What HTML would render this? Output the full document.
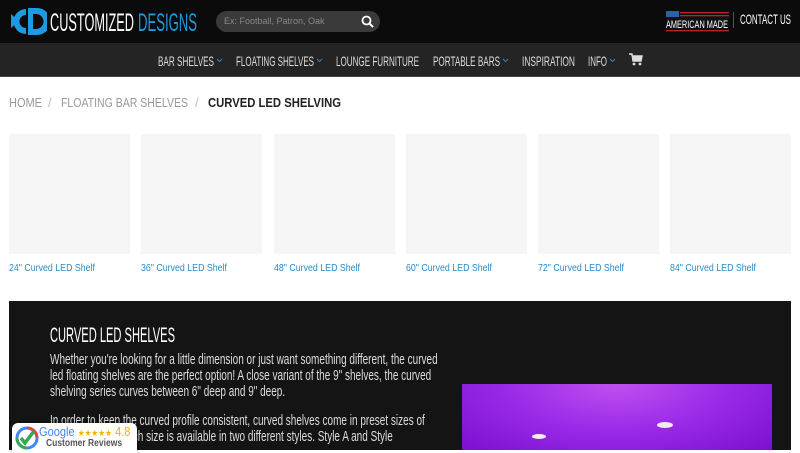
<!DOCTYPE html>
<html><head><meta charset="utf-8"><style>
*{margin:0;padding:0;box-sizing:border-box}
body{width:800px;height:450px;overflow:hidden;background:#fff;font-family:"Liberation Sans",sans-serif;position:relative}
.c{display:inline-block;transform:scaleX(.72);transform-origin:left center;white-space:nowrap}
.top{position:absolute;left:0;top:0;width:800px;height:43px;background:#0b0b0b}
.nav{position:absolute;left:0;top:43px;width:800px;height:34px;background:#242424;border-bottom:1px solid #444}
.tile{position:absolute;top:134px;width:121px;height:120px;background:#f5f5f5}
.dark{position:absolute;left:9px;top:301px;width:782px;height:149px;background:#141414}
p.t{position:absolute;left:50px;color:#ddd;font-size:14.5px;line-height:16px;white-space:nowrap}
p.t .c{transform:scaleX(.69)}
</style></head><body>
<div class="top">
 <svg style="position:absolute;left:9px;top:6px" width="38" height="31" viewBox="0 0 38 31">
  <path d="M2 8 L10 15 L2 22Z" fill="#1e9be0"/>
  <path d="M17 3 A12 12 0 1 0 17 28 L17 22 A6 6 0 1 1 17 9Z" fill="#1e9be0"/>
  <path d="M19 2 H28 A11 11 0 0 1 28 29 H19Z M24 8 V23 H27 A6 6 0 0 0 27 8Z" fill="#1e9be0" fill-rule="evenodd"/>
 </svg>
 <svg style="position:absolute;left:50px;top:8px" width="150" height="28"><text x="0" y="23" font-family="Liberation Sans" font-size="25" fill="#fff" textLength="84" lengthAdjust="spacingAndGlyphs">CUSTOMIZED</text><text x="88" y="23" font-family="Liberation Sans" font-size="25" fill="#1e9be0" textLength="59" lengthAdjust="spacingAndGlyphs">DESIGNS</text></svg>
 <div style="position:absolute;left:216px;top:11px;width:164px;height:21px;border-radius:11px;background:#3a3a3a;color:#888;font-size:9px;padding:5px 8px">Ex: Football, Patron, Oak
  <svg style="position:absolute;right:6px;top:4px" width="13" height="13" viewBox="0 0 13 13"><circle cx="5.5" cy="5.5" r="4" stroke="#fff" stroke-width="1.8" fill="none"/><path d="M8.5 8.5L12 12" stroke="#fff" stroke-width="2"/></svg></div>
 <svg style="position:absolute;left:666px;top:11px" width="63" height="21"><rect width="63" height="21" fill="#111"/><rect x="0" y="0" width="13" height="6" fill="#2a5fb0"/><rect x="14" y="1" width="49" height="1.3" fill="#b22"/><rect x="14" y="4" width="49" height="1.3" fill="#b22"/><rect x="0" y="19" width="63" height="1.3" fill="#b22"/><text x="0" y="17" fill="#fff" font-size="11" font-family="Liberation Sans" textLength="62" lengthAdjust="spacingAndGlyphs">AMERICAN MADE</text></svg>
 <div style="position:absolute;left:733px;top:12px;width:1px;height:16px;background:#555"></div>
 <svg style="position:absolute;left:740px;top:10px" width="52" height="20"><text x="0" y="14" fill="#fff" font-size="14" font-family="Liberation Sans" textLength="51" lengthAdjust="spacingAndGlyphs">CONTACT US</text></svg>
</div>
<div class="nav">
 <svg style="position:absolute;left:0;top:0" width="800" height="34" font-family="Liberation Sans" font-size="14" fill="#ddd">
  <text x="158" y="23" textLength="56" lengthAdjust="spacingAndGlyphs">BAR SHELVES</text><path d="M217 16l2.5 2.5 2.5-2.5" stroke="#3d7fb8" fill="none"/>
  <text x="236" y="23" textLength="78" lengthAdjust="spacingAndGlyphs">FLOATING SHELVES</text><path d="M317 16l2.5 2.5 2.5-2.5" stroke="#3d7fb8" fill="none"/>
  <text x="336" y="23" textLength="83" lengthAdjust="spacingAndGlyphs">LOUNGE FURNITURE</text>
  <text x="433" y="23" textLength="67" lengthAdjust="spacingAndGlyphs">PORTABLE BARS</text><path d="M503 16l2.5 2.5 2.5-2.5" stroke="#3d7fb8" fill="none"/>
  <text x="522" y="23" textLength="53" lengthAdjust="spacingAndGlyphs">INSPIRATION</text>
  <text x="588" y="23" textLength="19" lengthAdjust="spacingAndGlyphs">INFO</text><path d="M610 16l2.5 2.5 2.5-2.5" stroke="#3d7fb8" fill="none"/>
 </svg>
 <svg style="position:absolute;left:629px;top:10px" width="14" height="13" viewBox="0 0 14 13"><path d="M0 1H3L4 8H12L13 3H3.5" fill="#ddd" stroke="#ddd" stroke-width="1.4"/><circle cx="5" cy="11" r="1.4" fill="#ddd"/><circle cx="11" cy="11" r="1.4" fill="#ddd"/></svg>
</div>
<svg style="position:absolute;left:0;top:90px" width="800" height="30" font-family="Liberation Sans" font-size="13">
 <text x="9" y="17" fill="#999" textLength="33" lengthAdjust="spacingAndGlyphs">HOME</text>
 <text x="48" y="17" fill="#bbb">/</text>
 <text x="61" y="17" fill="#999" textLength="127" lengthAdjust="spacingAndGlyphs">FLOATING BAR SHELVES</text>
 <text x="195" y="17" fill="#bbb">/</text>
 <text x="208" y="17" fill="#222" font-weight="bold" textLength="133" lengthAdjust="spacingAndGlyphs">CURVED LED SHELVING</text>
</svg>
<div class="tile" style="left:9px"></div><div class="tile" style="left:141px"></div><div class="tile" style="left:274px"></div><div class="tile" style="left:406px"></div><div class="tile" style="left:538px"></div><div class="tile" style="left:670px"></div>
<svg style="position:absolute;left:0;top:258px" width="800" height="20" font-family="Liberation Sans" font-size="10.5" fill="#2a8bc6">
 <text x="9" y="13" textLength="86" lengthAdjust="spacingAndGlyphs">24" Curved LED Shelf</text>
 <text x="141" y="13" textLength="86" lengthAdjust="spacingAndGlyphs">36" Curved LED Shelf</text>
 <text x="274" y="13" textLength="86" lengthAdjust="spacingAndGlyphs">48" Curved LED Shelf</text>
 <text x="406" y="13" textLength="86" lengthAdjust="spacingAndGlyphs">60" Curved LED Shelf</text>
 <text x="538" y="13" textLength="86" lengthAdjust="spacingAndGlyphs">72" Curved LED Shelf</text>
 <text x="670" y="13" textLength="86" lengthAdjust="spacingAndGlyphs">84" Curved LED Shelf</text>
</svg>
<div class="dark"></div>
<svg style="position:absolute;left:50px;top:322px" width="130" height="26"><text x="0" y="20" fill="#fff" font-size="21" font-family="Liberation Sans" textLength="125" lengthAdjust="spacingAndGlyphs">CURVED LED SHELVES</text></svg>
<p class="t" style="top:352px"><span class="c">Whether you're looking for a little dimension or just want something different, the curved</span></p>
<p class="t" style="top:368px"><span class="c">led floating shelves are the perfect option! A close variant of the 9" shelves, the curved</span></p>
<p class="t" style="top:384px"><span class="c">shelving series curves between 6" deep and 9" deep.</span></p>
<p class="t" style="top:413px"><span class="c">In order to keep the curved profile consistent, curved shelves come in preset sizes of</span></p>
<p class="t" style="top:429px"><span class="c">24" to 84" long. Each size is available in two different styles. Style A and Style</span></p>
<div style="position:absolute;left:462px;top:384px;width:310px;height:66px;background:radial-gradient(ellipse at 50% 0%,#c050f0,#9a2ae8 50%,#7a10d0)">
 <div style="position:absolute;left:70px;top:50px;width:14px;height:5px;border-radius:50%;background:#eee"></div>
 <div style="position:absolute;left:195px;top:38px;width:16px;height:6px;border-radius:50%;background:#eee"></div>
</div>
<div style="position:absolute;left:12px;top:423px;width:125px;height:30px;background:#fff;border-radius:6px 6px 0 0;box-shadow:0 0 3px rgba(0,0,0,.4)">
 <svg style="position:absolute;left:3px;top:3px" width="24" height="24" viewBox="0 0 24 24"><circle cx="12" cy="12" r="10" fill="none" stroke="#4285f4" stroke-width="3"/><path d="M12 2A10 10 0 0 1 22 12" stroke="#ea4335" stroke-width="3" fill="none"/><path d="M2 12A10 10 0 0 0 12 22" stroke="#34a853" stroke-width="3" fill="none"/><path d="M6 12l4 5 9-12" stroke="#34a853" stroke-width="3.5" fill="none"/></svg>
 <div style="position:absolute;left:27px;top:1px;font-size:13px;color:#4285f4;white-space:nowrap"><span class="c" style="transform:scaleX(.85)">Google <span style="color:#f4b400;font-size:9px">★★★★★</span> <span style="color:#f4b400">4.8</span></span></div>
 <div style="position:absolute;left:34px;top:15px;font-size:10px;color:#555;font-weight:bold;white-space:nowrap"><span class="c" style="transform:scaleX(.85)">Customer Reviews</span></div>
</div>
</body></html>
